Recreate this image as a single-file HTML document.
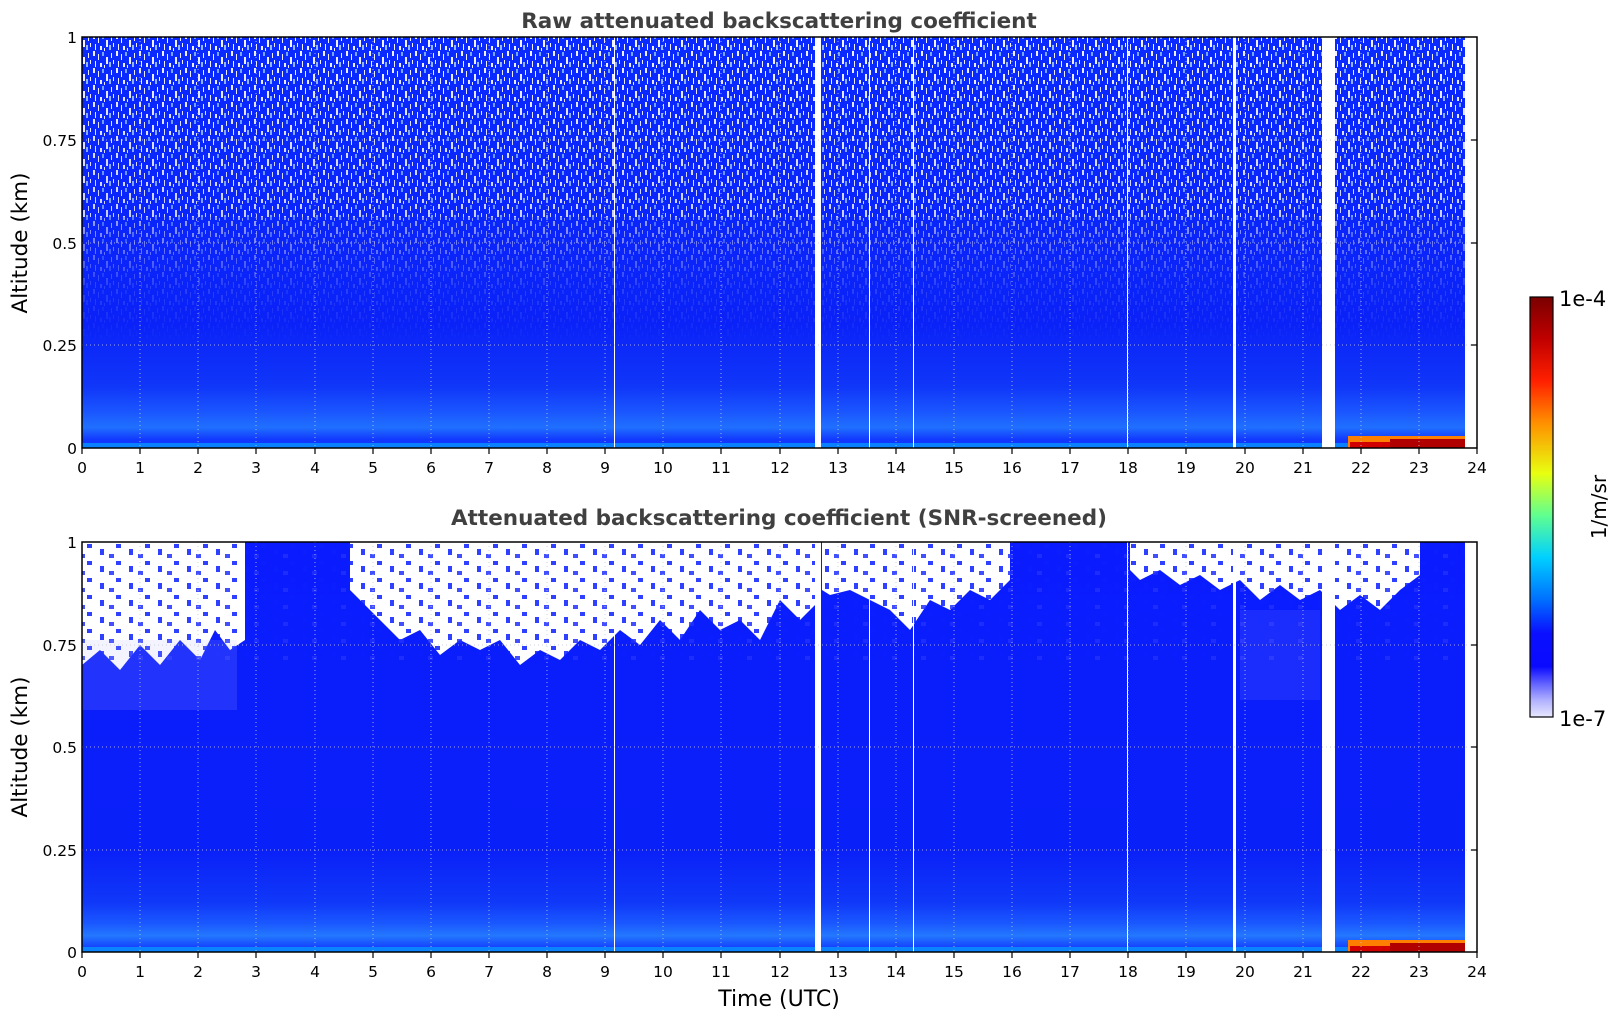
<!DOCTYPE html>
<html><head><meta charset="utf-8"><style>
html,body{margin:0;padding:0;background:#fff;width:1621px;height:1020px;overflow:hidden}
svg text{font-family:"DejaVu Sans","Liberation Sans",sans-serif;fill:#000}
</style></head><body>
<svg width="1621" height="1020" viewBox="0 0 1621 1020" xmlns="http://www.w3.org/2000/svg">
<defs>
<pattern id="spk" width="23" height="17" patternUnits="userSpaceOnUse">
<rect x="1" y="0" width="2" height="5" fill="#fff"/><rect x="6" y="3" width="1" height="6" fill="#fff"/>
<rect x="10" y="1" width="2" height="4" fill="#7fb0ff"/><rect x="14" y="6" width="2" height="7" fill="#fff"/>
<rect x="19" y="2" width="1" height="5" fill="#fff"/><rect x="3" y="10" width="1" height="6" fill="#fff"/>
<rect x="8" y="12" width="2" height="4" fill="#fff"/><rect x="17" y="11" width="2" height="5" fill="#9cc0ff"/>
<rect x="21" y="9" width="1" height="4" fill="#fff"/><rect x="12" y="14" width="1" height="3" fill="#fff"/>
</pattern>
<pattern id="bspk" width="29" height="17" patternUnits="userSpaceOnUse">
<rect x="0" y="0" width="5" height="4" fill="#0a1eff"/><rect x="13" y="5" width="4" height="6" fill="#0a1eff"/>
<rect x="22" y="10" width="5" height="4" fill="#2030ff"/>
</pattern>
<linearGradient id="fadeTop" x1="0" y1="0" x2="0" y2="1">
<stop offset="0" stop-color="#fff" stop-opacity="0.9"/><stop offset="0.45" stop-color="#fff" stop-opacity="0.55"/>
<stop offset="0.6" stop-color="#fff" stop-opacity="0.15"/><stop offset="0.75" stop-color="#fff" stop-opacity="0"/>
</linearGradient>
<mask id="m1"><rect x="82" y="37" width="1395" height="411" fill="url(#fadeTop)"/></mask>
<linearGradient id="base1" x1="0" y1="0" x2="0" y2="1">
<stop offset="0" stop-color="#0a2aff"/><stop offset="0.7" stop-color="#0a22f8"/><stop offset="0.85" stop-color="#1036f8"/><stop offset="0.91" stop-color="#1a55ff"/><stop offset="0.95" stop-color="#2070ff"/><stop offset="0.98" stop-color="#1238ff"/><stop offset="1" stop-color="#1238ff"/>
</linearGradient>
<linearGradient id="base2" x1="0" y1="0" x2="0" y2="1">
<stop offset="0" stop-color="#0a1cff"/><stop offset="0.75" stop-color="#0a20f8"/><stop offset="0.88" stop-color="#1038f8"/><stop offset="0.93" stop-color="#1a58ff"/><stop offset="0.96" stop-color="#2478ff"/><stop offset="0.99" stop-color="#1440ff"/>
</linearGradient>
<linearGradient id="cb" x1="0" y1="0" x2="0" y2="1">
<stop offset="0" stop-color="#7a0000"/><stop offset="0.1" stop-color="#c00000"/><stop offset="0.2" stop-color="#ff2000"/><stop offset="0.3" stop-color="#ff9000"/><stop offset="0.42" stop-color="#e8ff10"/><stop offset="0.52" stop-color="#60ff90"/><stop offset="0.62" stop-color="#00d0ff"/><stop offset="0.72" stop-color="#0070ff"/><stop offset="0.8" stop-color="#0a10ff"/><stop offset="0.88" stop-color="#0a0aff"/><stop offset="0.92" stop-color="#6060ff"/><stop offset="0.96" stop-color="#b0b0ff"/><stop offset="1" stop-color="#e8e8ff"/>
</linearGradient>
</defs>

<text x="779" y="28" text-anchor="middle" font-size="21.5" font-weight="bold" style="fill:#404040">Raw attenuated backscattering coefficient</text>
<rect x="82" y="37" width="1383" height="411" fill="url(#base1)"/>
<rect x="82" y="37" width="1383" height="411" fill="url(#spk)" mask="url(#m1)"/>
<rect x="82" y="37" width="1383" height="180" fill="url(#spk)" opacity="0.5"/>
<rect x="82" y="443" width="1383" height="5" fill="#00c8ff" opacity="0.5"/>
<rect x="1348" y="436" width="117" height="12" fill="#ff8000"/>
<rect x="1390" y="439" width="75" height="9" fill="#b00000"/>
<rect x="1350" y="442" width="40" height="6" fill="#d00000"/>

<rect x="82" y="542" width="1383" height="410" fill="url(#base2)"/>
<path d="M82 542 H245 V640 L230 650 L215 630 L200 660 L180 640 L160 665 L140 645 L120 670 L100 650 L82 665 Z" fill="#fff"/>
<path d="M350 542 H820 V600 L800 620 L780 600 L760 640 L740 620 L720 630 L700 610 L680 640 L660 620 L640 645 L620 630 L600 650 L580 640 L560 660 L540 650 L520 665 L500 640 L480 650 L460 640 L440 655 L420 630 L400 640 L380 620 L360 600 L350 590 Z" fill="#fff"/>
<path d="M822 542 H1010 V580 L990 600 L970 590 L950 610 L930 600 L910 630 L890 610 L870 600 L850 590 L830 595 L822 590 Z" fill="#fff"/>
<path d="M1130 542 H1420 V575 L1400 590 L1380 610 L1360 595 L1340 610 L1320 590 L1300 600 L1280 585 L1260 600 L1240 580 L1220 590 L1200 575 L1180 585 L1160 570 L1140 580 L1130 570 Z" fill="#fff"/>
<rect x="82" y="542" width="1383" height="120" fill="url(#bspk)" opacity="0.85"/>
<rect x="82" y="640" width="155" height="70" fill="#b0b8ff" opacity="0.15"/>
<rect x="1240" y="610" width="80" height="90" fill="#b0b8ff" opacity="0.1"/>
<rect x="82" y="947" width="1383" height="5" fill="#00c8ff" opacity="0.5"/>
<rect x="1348" y="940" width="117" height="12" fill="#ff8000"/>
<rect x="1390" y="943" width="75" height="9" fill="#b00000"/>
<rect x="1350" y="946" width="40" height="6" fill="#d00000"/>

<g fill="#fff">
<rect x="815" y="37" width="6" height="411"/><rect x="815" y="542" width="6" height="410"/>
<rect x="1233" y="37" width="3" height="411"/><rect x="1233" y="542" width="3" height="410"/>
<rect x="1322" y="37" width="13" height="411"/><rect x="1322" y="542" width="13" height="410"/>
<rect x="1465" y="37" width="12" height="411"/><rect x="1465" y="542" width="12" height="410"/>
<rect x="614" y="37" width="1" height="411"/><rect x="614" y="542" width="1" height="410"/>
<rect x="869" y="37" width="1" height="411"/><rect x="869" y="542" width="1" height="410"/>
<rect x="913" y="37" width="1" height="411"/><rect x="913" y="542" width="1" height="410"/>
<rect x="1127" y="37" width="1" height="411"/><rect x="1127" y="542" width="1" height="410"/>
</g>

<g stroke="#c8c8d8" stroke-width="1" stroke-dasharray="1,3" opacity="0.8">
<path d="M140 37V448M198 37V448M256 37V448M315 37V448M373 37V448M431 37V448M489 37V448M547 37V448M605 37V448M663 37V448M721 37V448M780 37V448M838 37V448M896 37V448M954 37V448M1012 37V448M1070 37V448M1128 37V448M1186 37V448M1245 37V448M1303 37V448M1361 37V448M1419 37V448"/>
<path d="M82 140H1477M82 243H1477M82 345H1477"/>
<path d="M140 542V952M198 542V952M256 542V952M315 542V952M373 542V952M431 542V952M489 542V952M547 542V952M605 542V952M663 542V952M721 542V952M780 542V952M838 542V952M896 542V952M954 542V952M1012 542V952M1070 542V952M1128 542V952M1186 542V952M1245 542V952M1303 542V952M1361 542V952M1419 542V952"/>
<path d="M82 645H1477M82 747H1477M82 850H1477"/>
</g>

<g fill="none" stroke="#000" stroke-width="1.5">
<rect x="82" y="37" width="1395" height="411"/>
<rect x="82" y="542" width="1395" height="410"/>
</g>
<g stroke="#000" stroke-width="1.2">
<path d="M82 448v6M140 448v6M198 448v6M256 448v6M315 448v6M373 448v6M431 448v6M489 448v6M547 448v6M605 448v6M663 448v6M721 448v6M780 448v6M838 448v6M896 448v6M954 448v6M1012 448v6M1070 448v6M1128 448v6M1186 448v6M1245 448v6M1303 448v6M1361 448v6M1419 448v6M1477 448v6"/>
<path d="M82 952v6M140 952v6M198 952v6M256 952v6M315 952v6M373 952v6M431 952v6M489 952v6M547 952v6M605 952v6M663 952v6M721 952v6M780 952v6M838 952v6M896 952v6M954 952v6M1012 952v6M1070 952v6M1128 952v6M1186 952v6M1245 952v6M1303 952v6M1361 952v6M1419 952v6M1477 952v6"/>
<path d="M1477 140h-6M1477 243h-6M1477 345h-6M1477 645h-6M1477 747h-6M1477 850h-6"/>
</g>

<g font-size="15.5" text-anchor="middle">
<text x="82" y="473">0</text><text x="140" y="473">1</text><text x="198" y="473">2</text><text x="256" y="473">3</text><text x="315" y="473">4</text><text x="373" y="473">5</text><text x="431" y="473">6</text><text x="489" y="473">7</text><text x="547" y="473">8</text><text x="605" y="473">9</text><text x="663" y="473">10</text><text x="721" y="473">11</text><text x="780" y="473">12</text><text x="838" y="473">13</text><text x="896" y="473">14</text><text x="954" y="473">15</text><text x="1012" y="473">16</text><text x="1070" y="473">17</text><text x="1128" y="473">18</text><text x="1186" y="473">19</text><text x="1245" y="473">20</text><text x="1303" y="473">21</text><text x="1361" y="473">22</text><text x="1419" y="473">23</text><text x="1477" y="473">24</text>
<text x="82" y="977">0</text><text x="140" y="977">1</text><text x="198" y="977">2</text><text x="256" y="977">3</text><text x="315" y="977">4</text><text x="373" y="977">5</text><text x="431" y="977">6</text><text x="489" y="977">7</text><text x="547" y="977">8</text><text x="605" y="977">9</text><text x="663" y="977">10</text><text x="721" y="977">11</text><text x="780" y="977">12</text><text x="838" y="977">13</text><text x="896" y="977">14</text><text x="954" y="977">15</text><text x="1012" y="977">16</text><text x="1070" y="977">17</text><text x="1128" y="977">18</text><text x="1186" y="977">19</text><text x="1245" y="977">20</text><text x="1303" y="977">21</text><text x="1361" y="977">22</text><text x="1419" y="977">23</text><text x="1477" y="977">24</text>
</g>
<g font-size="15.5" text-anchor="end">
<text x="77" y="43">1</text><text x="77" y="146">0.75</text><text x="77" y="249">0.5</text><text x="77" y="351">0.25</text><text x="77" y="454">0</text>
<text x="77" y="548">1</text><text x="77" y="651">0.75</text><text x="77" y="753">0.5</text><text x="77" y="856">0.25</text><text x="77" y="958">0</text>
</g>
<text x="27" y="243" font-size="21.5" text-anchor="middle" transform="rotate(-90 27 243)">Altitude (km)</text>
<text x="27" y="747" font-size="21.5" text-anchor="middle" transform="rotate(-90 27 747)">Altitude (km)</text>
<text x="779" y="525" text-anchor="middle" font-size="21.5" font-weight="bold" style="fill:#404040">Attenuated backscattering coefficient (SNR-screened)</text>
<text x="779" y="1006" text-anchor="middle" font-size="22">Time (UTC)</text>

<rect x="1530" y="297" width="23" height="420" fill="url(#cb)" stroke="#000" stroke-width="1.2"/>
<text x="1559" y="306" font-size="21">1e-4</text>
<text x="1559" y="726" font-size="21">1e-7</text>
<text x="1606" y="507" font-size="20" text-anchor="middle" transform="rotate(-90 1606 507)">1/m/sr</text>
</svg>
</body></html>
